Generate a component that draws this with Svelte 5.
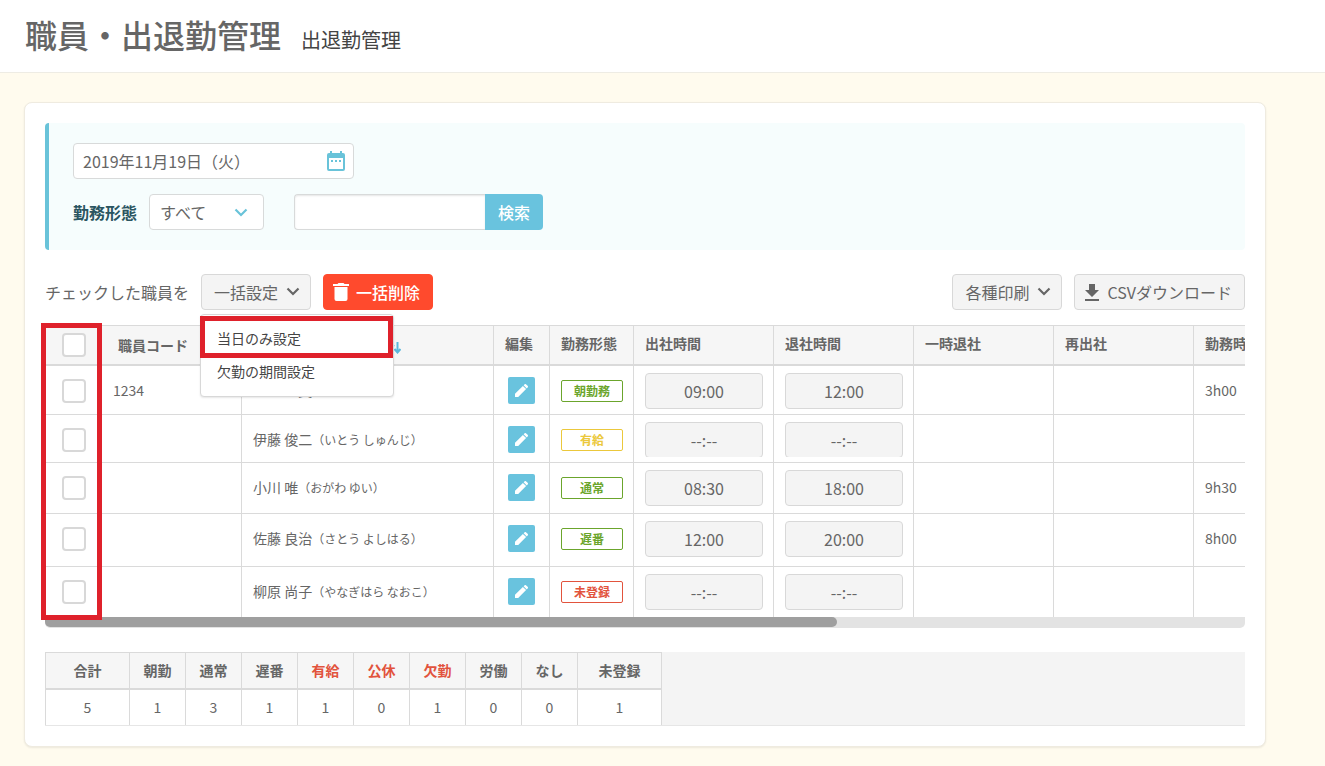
<script>
  const columns = [
    { label: '編集', width: 56 },
    { label: '勤務形態', width: 84 },
    { label: '出社時間', width: 140 },
    { label: '退社時間', width: 140 },
    { label: '一時退社', width: 140 },
    { label: '再出社', width: 140 },
    { label: '勤務時間', width: 140 }
  ];

  const staff = [
    { code: '1234', name: '三上 二美', kana: 'みかみ ふみ', type: '朝勤務', tone: 'green', start: '09:00', end: '12:00', total: '3h00', height: 49 },
    { code: '', name: '伊藤 俊二', kana: 'いとう しゅんじ', type: '有給', tone: 'yellow', start: '--:--', end: '--:--', total: '', height: 48 },
    { code: '', name: '小川 唯', kana: 'おがわ ゆい', type: '通常', tone: 'green', start: '08:30', end: '18:00', total: '9h30', height: 51 },
    { code: '', name: '佐藤 良治', kana: 'さとう よしはる', type: '遅番', tone: 'green', start: '12:00', end: '20:00', total: '8h00', height: 53 },
    { code: '', name: '柳原 尚子', kana: 'やなぎはら なおこ', type: '未登録', tone: 'red', start: '--:--', end: '--:--', total: '', height: 50 }
  ];

  const summary = [
    { label: '合計', count: 5, wide: true },
    { label: '朝勤', count: 1 },
    { label: '通常', count: 3 },
    { label: '遅番', count: 1 },
    { label: '有給', count: 1, alert: true },
    { label: '公休', count: 0, alert: true },
    { label: '欠勤', count: 1, alert: true },
    { label: '労働', count: 0 },
    { label: 'なし', count: 0 },
    { label: '未登録', count: 1, wide: true }
  ];
</script>

{#snippet chevron()}
  <svg class="chevron" width="14" height="10" viewBox="0 0 14 10" aria-hidden="true">
    <path d="M1.5 1.500 L7 7 L12.5 1.500" fill="none" stroke="currentColor" stroke-width="2.2" />
  </svg>
{/snippet}

<div class="page">
  <header>
    <h1>職員・出退勤管理</h1>
    <span class="subtitle">出退勤管理</span>
  </header>

  <main class="card">
    <form class="filters" onsubmit={(e) => e.preventDefault()}>
      <div class="date-box">
        <input type="text" value="2019年11月19日（火）" aria-label="日付" />
        <svg width="18" height="20" viewBox="0 0 18 20" aria-hidden="true">
          <path fill="currentColor" fill-rule="evenodd" d="M3 0h2v2h8V0h2v2h1a2 2 0 0 1 2 2v14a2 2 0 0 1-2 2H2a2 2 0 0 1-2-2V4a2 2 0 0 1 2-2h1zM2 7v11h14V7zM4 9h2v2H4zM8 9h2v2H8zM12 9h2v2h-2z" />
        </svg>
      </div>
      <div class="filter-row">
        <label for="work-type">勤務形態</label>
        <div class="select-box">
          <select id="work-type"><option>すべて</option></select>
          {@render chevron()}
        </div>
        <div class="search">
          <input type="text" aria-label="検索キーワード" />
          <button type="submit">検索</button>
        </div>
      </div>
    </form>

    <div class="toolbar">
      <span class="lead">チェックした職員を</span>
      <div class="dropdown">
        <button class="btn" type="button">一括設定{@render chevron()}</button>
        <ul class="menu">
          <li><button type="button">当日のみ設定</button></li>
          <li><button type="button">欠勤の期間設定</button></li>
        </ul>
        <div class="mark mark-menu"></div>
      </div>
      <button class="btn danger" type="button">
        <svg width="16" height="18" viewBox="0 0 16 18" aria-hidden="true">
          <path fill="currentColor" d="M0 1h4.500L5.500 0h5L11.500 1H16v2H0zM1.500 4h13v12a2 2 0 0 1-2 2h-9a2 2 0 0 1-2-2z" />
        </svg>
        一括削除
      </button>
      <button class="btn push" type="button">各種印刷{@render chevron()}</button>
      <button class="btn csv" type="button">
        <svg width="14" height="17" viewBox="0 0 14 17" aria-hidden="true">
          <path fill="currentColor" d="M4 0h6v6h4l-7 7-7-7h4zM0 15h14v2H0z" />
        </svg>
        CSVダウンロード
      </button>
    </div>

    <div class="sheet">
      <div class="viewport">
        <table class="staff">
          <colgroup>
            <col style="width: 56px" />
            <col style="width: 140px" />
            <col style="width: 252px" />
            {#each columns as column}
              <col style="width: {column.width}px" />
            {/each}
          </colgroup>
          <thead>
            <tr>
              <th class="check"><input type="checkbox" aria-label="すべて選択" /></th>
              <th class="sortable">職員コード</th>
              <th class="sortable">
                <span class="sort">
                  職員名（ふりがな）
                  <svg width="13" height="12" viewBox="0 0 13 12" aria-hidden="true">
                    <path d="M3.500 12V2M1 4.500L3.500 1.500 6 4.500M9.500 0v10M6.500 7L9.500 10.500 12.500 7" fill="none" stroke="currentColor" stroke-width="2" />
                  </svg>
                </span>
              </th>
              {#each columns as column}
                <th>{column.label}</th>
              {/each}
            </tr>
          </thead>
          <tbody>
            {#each staff as person}
              <tr style="height: {person.height}px">
                <td class="check"><input type="checkbox" aria-label="{person.name}を選択" /></td>
                <td>{person.code}</td>
                <td>{person.name}<small>（{person.kana}）</small></td>
                <td class="edit">
                  <button type="button" aria-label="{person.name}を編集">
                    <svg width="13" height="13" viewBox="0 0 13 13" aria-hidden="true">
                      <path fill="currentColor" d="M0 13v-3.200L7.900 1.900l3.200 3.200L3.200 13zM8.600 1.200l.8-.8a1.300 1.300 0 0 1 1.800 0l1.400 1.400a1.300 1.300 0 0 1 0 1.800l-.8.8z" />
                    </svg>
                  </button>
                </td>
                <td class="type"><span class="badge {person.tone}">{person.type}</span></td>
                {#each [['出社時間', person.start], ['退社時間', person.end]] as [label, time]}
                  <td class="time">
                    <div style="height: {person.height - 13}px">
                      <input type="text" value={time} aria-label="{person.name} {label}" />
                    </div>
                  </td>
                {/each}
                <td></td>
                <td></td>
                <td>{person.total}</td>
              </tr>
            {/each}
          </tbody>
        </table>
      </div>
      <div class="track"><div class="thumb"></div></div>
      <div class="mark mark-checks"></div>
    </div>

    <div class="summary">
      <table>
        <thead>
          <tr>
            {#each summary as item}
              <th class:wide={item.wide} class:alert={item.alert}>{item.label}</th>
            {/each}
          </tr>
        </thead>
        <tbody>
          <tr>
            {#each summary as item}
              <td>{item.count}</td>
            {/each}
          </tr>
        </tbody>
      </table>
    </div>
  </main>
</div>

<style>
  :global(body) {
    margin: 0;
    background: #fffbee;
  }

  .page,
  .page :is(button, input, select) {
    font-family: 'Noto Sans CJK JP', sans-serif;
    color: #666;
  }

  .page {
    font-size: 14px;
    line-height: 22px;
    padding-bottom: 19px;
  }

  .page :is(*, *::before) {
    box-sizing: border-box;
  }

  button,
  input,
  select {
    margin: 0;
    padding: 0;
    font-size: 16px;
  }

  svg {
    flex: none;
    display: block;
  }

  header {
    display: flex;
    align-items: baseline;
    gap: 20px;
    height: 73px;
    padding: 10px 25px 0;
    background: #fff;
    border-bottom: 1px solid #eeece4;
  }

  h1 {
    margin: 0;
    font-size: 32px;
    line-height: 48px;
    font-weight: 500;
  }

  .subtitle {
    font-size: 20px;
    color: #444;
  }

  .card {
    margin: 29px 59px 0 24px;
    padding: 20px;
    background: #fff;
    border: 1px solid #efebe0;
    border-radius: 8px;
    box-shadow: 0 1px 2px rgb(0 0 0 / 8%);
  }

  .filters {
    display: flex;
    flex-direction: column;
    align-items: flex-start;
    gap: 15px;
    padding: 20px 24px;
    background: #f6fdfd;
    border-left: 4px solid #69c3d9;
    border-radius: 4px;
  }

  .date-box {
    display: flex;
    align-items: center;
    width: 281px;
    height: 36px;
    padding: 0 8px 0 9px;
    background: #fff;
    border: 1px solid #d8dada;
    border-radius: 4px;
    color: #69c3d9;
  }

  .date-box input {
    flex: 1;
    min-width: 0;
    border: 0;
    background: none;
  }

  .filter-row {
    display: flex;
    align-items: center;
  }

  .filter-row label {
    margin-right: 12px;
    font-size: 16px;
    font-weight: 700;
    color: #2a5561;
  }

  .select-box {
    position: relative;
    margin-right: 30px;
    color: #69c3d9;
  }

  .select-box select {
    appearance: none;
    display: block;
    width: 115px;
    height: 36px;
    padding: 0 36px 0 10px;
    background: #fff;
    border: 1px solid #d8dada;
    border-radius: 4px;
  }

  .select-box .chevron {
    position: absolute;
    right: 16px;
    top: 14px;
    pointer-events: none;
  }

  .search {
    display: flex;
  }

  .search input {
    width: 191px;
    height: 36px;
    padding: 0 10px;
    background: #fff;
    border: 1px solid #d8dada;
    border-right: 0;
    border-radius: 4px 0 0 4px;
    box-shadow: inset 0 1px 2px rgb(0 0 0 / 10%);
  }

  .search button {
    width: 58px;
    border: 0;
    border-radius: 0 4px 4px 0;
    background: #69c3de;
    color: #fff;
    font-weight: 500;
  }

  .toolbar {
    display: flex;
    align-items: center;
    gap: 12px;
    margin: 24px 0 15px;
  }

  .lead {
    font-size: 16px;
  }

  .btn {
    display: flex;
    align-items: center;
    gap: 8px;
    height: 36px;
    padding: 0 10px 0 12px;
    background: #f4f4f4;
    border: 1px solid #d8d8d8;
    border-radius: 4px;
  }

  .page .danger {
    padding: 0 12px 0 9px;
    gap: 7px;
    background: #ff4a2d;
    border-color: #ff4a2d;
    color: #fff;
    font-weight: 500;
  }

  .push {
    margin-left: auto;
  }

  .csv {
    padding: 0 12px 0 10px;
  }

  .dropdown {
    position: relative;
  }

  .menu {
    position: absolute;
    z-index: 2;
    top: 40px;
    left: -1px;
    width: 194px;
    margin: 0;
    padding: 6px 0 9px;
    list-style: none;
    background: #fff;
    border: 1px solid #d8d8d8;
    border-radius: 4px;
    box-shadow: 0 1px 2px rgb(0 0 0 / 10%);
  }

  .menu button {
    display: block;
    width: 100%;
    height: 33px;
    padding: 0 16px;
    background: none;
    border: 0;
    font-size: 14px;
    text-align: left;
    color: #444;
  }

  .mark {
    position: absolute;
    z-index: 3;
    border: 5px solid #df212b;
    pointer-events: none;
  }

  .mark-menu {
    top: 42px;
    left: -1px;
    width: 193px;
    height: 42px;
  }

  .mark-checks {
    top: -2px;
    bottom: 8px;
    left: -4px;
    width: 61px;
  }

  .sheet {
    position: relative;
  }

  .viewport {
    overflow: hidden;
  }

  table {
    border-collapse: separate;
    border-spacing: 0;
    table-layout: fixed;
  }

  .staff {
    width: 1288px;
  }

  th,
  td {
    border-left: 1px solid #dadada;
    border-bottom: 1px solid #dadada;
    white-space: nowrap;
  }

  th {
    background: #f6f6f6;
    border-top: 1px solid #dadada;
    border-bottom: 2px solid #dadada;
    font-weight: 700;
  }

  .staff th,
  .staff td {
    padding: 13px 11px 0;
    text-align: left;
    vertical-align: top;
  }

  .staff th {
    height: 41px;
    padding-top: 6px;
  }

  .staff th.sortable {
    padding-top: 8px;
    padding-left: 16px;
  }

  .sort {
    display: flex;
    align-items: center;
    gap: 4px;
  }

  .sort svg {
    color: #5bb8dc;
    margin-top: 6px;
  }

  .staff tbody tr:last-child td {
    border-bottom: 0;
  }

  .staff td.check {
    padding: 13px 0 0 16px;
  }

  .staff th.check {
    padding: 7px 0 0 16px;
  }

  .check input {
    appearance: none;
    display: block;
    width: 24px;
    height: 24px;
    background: #fff;
    border: 2px solid #d8d8d8;
    border-radius: 4px;
  }

  small {
    font-size: 12px;
  }

  .staff td.edit {
    padding: 11px 14px 0;
  }

  .staff td.type {
    padding-top: 14px;
  }

  .edit button {
    display: grid;
    place-items: center;
    width: 27px;
    height: 27px;
    background: #69c3de;
    border: 0;
    border-radius: 2px;
    color: #fff;
  }

  .badge {
    display: block;
    width: 62px;
    height: 22px;
    border: 1px solid currentColor;
    border-radius: 2px;
    font-size: 12px;
    line-height: 20px;
    font-weight: 700;
    text-align: center;
  }

  .green {
    color: #6ba52c;
  }

  .yellow {
    color: #ebc83c;
  }

  .red {
    color: #e2533d;
  }

  .staff td.time {
    padding: 7px 10px 5px 11px;
  }

  .time div {
    overflow: hidden;
  }

  .time input {
    display: block;
    width: 100%;
    height: 36px;
    background: #f4f4f4;
    border: 1px solid #d8d8d8;
    border-radius: 4px;
    text-align: center;
  }

  .track {
    height: 11px;
    background: #e3e3e3;
    border-radius: 0 0 5px 5px;
  }

  .thumb {
    width: 66%;
    height: 10px;
    background: #9f9f9f;
    border-radius: 0 5px 5px 5px;
  }

  .summary {
    margin-top: 24px;
    background: #f4f4f4;
    border-bottom: 1px solid #e6e6e6;
  }

  .summary table {
    width: 617px;
    border-right: 1px solid #dadada;
  }

  .summary th {
    width: 56px;
    height: 38px;
    padding: 0 0 2px;
  }

  .summary th.wide {
    width: 84px;
  }

  .summary th.alert {
    color: #e2533d;
  }

  .summary td {
    height: 35px;
    padding: 0 0 2px;
    background: #fff;
    border-bottom: 0;
    text-align: center;
  }
</style>
